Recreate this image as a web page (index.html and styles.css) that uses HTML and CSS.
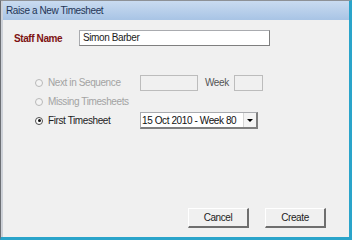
FILE: index.html
```html
<!DOCTYPE html>
<html>
  <head>
    <title>Raise a New Timesheet</title>
    <link rel="stylesheet" href="styles.css">
  </head>
  <body>
    <div class="window">
      <div class="frame">
        <div class="titlebar">Raise a New Timesheet</div>
        <div class="content">
          <div class="staff-row">
            <label class="staff-label">Staff Name</label>
            <div class="textbox staff-box">Simon Barber</div>
          </div>

          <div class="options">
            <div class="option disabled">
              <span class="radio"></span>
              <span class="option-label">Next in Sequence</span>
              <div class="textbox off seq-box"></div>
              <span class="week-label">Week</span>
              <div class="textbox off week-box"></div>
            </div>
            <div class="option disabled">
              <span class="radio"></span>
              <span class="option-label">Missing Timesheets</span>
            </div>
            <div class="option">
              <span class="radio checked"></span>
              <span class="option-label">First Timesheet</span>
              <div class="combo">
                <span class="combo-text">15 Oct 2010 - Week 80</span>
                <span class="combo-btn"></span>
              </div>
            </div>
          </div>

          <div class="buttons">
            <button class="btn">Cancel</button>
            <button class="btn">Create</button>
          </div>
        </div>
      </div>
    </div>
  </body>
</html>
```

FILE: styles.css
```css
body {
  margin: 0;
  font-family: "Liberation Sans", Arial, sans-serif;
  font-size: 10px;
  letter-spacing: -0.4px;
  color: #1c1c1c;
}
.window {
  width: 352px;
  height: 240px;
  box-sizing: border-box;
  border-top: 1px solid #8d9196;
  border-left: 1px solid #6c6f74;
  border-right: 3px solid #2aa4ca;
  border-bottom: 3px solid #2aa4ca;
  background: #f0f0f0;
}
.frame {
  height: 100%;
  display: flex;
  flex-direction: column;
  border-left: 2px solid #cdd1d8;
}
.titlebar {
  height: 19px;
  line-height: 19px;
  padding-left: 3px;
  color: #1f3556;
  background: linear-gradient(#c9dbf0, #a8c4e5);
}
.content {
  flex: 1;
  display: flex;
  flex-direction: column;
  padding: 10px 23px 9px 11px;
}
.staff-row {
  display: flex;
  align-items: center;
}
.staff-label {
  width: 65px;
  font-weight: bold;
  color: #7d1212;
}
.textbox {
  box-sizing: border-box;
  height: 16px;
  line-height: 14px;
  padding-left: 3px;
  background: #fff;
  border: 1px solid #a9abaf;
  border-right-color: #7f7f7f;
  border-bottom-color: #7f7f7f;
}
.staff-box {
  width: 191px;
}
.textbox.off {
  background: #f0f0f0;
  border-color: #bcbcbc;
}
.options {
  display: flex;
  flex-direction: column;
  gap: 2px;
  margin-top: 28px;
  padding-left: 21px;
}
.option {
  display: flex;
  align-items: center;
  height: 17px;
}
.radio {
  box-sizing: border-box;
  width: 8px;
  height: 8px;
  margin-right: 5px;
  border-radius: 50%;
  border: 1px solid #4d4d4d;
  background: #fff;
  display: flex;
  align-items: center;
  justify-content: center;
}
.radio.checked::after {
  content: "";
  width: 3px;
  height: 3px;
  border-radius: 50%;
  background: #111;
}
.option-label {
  width: 92px;
}
.disabled {
  color: #a3a3a3;
}
.disabled .radio {
  border-color: #b8b8b8;
  background: #f4f4f4;
}
.seq-box {
  width: 58px;
}
.week-label {
  margin: 0 5px 0 7px;
  color: #555;
}
.week-box {
  width: 29px;
}
.combo {
  box-sizing: border-box;
  width: 118px;
  height: 17px;
  display: flex;
  align-items: center;
  justify-content: space-between;
  background: #fff;
  border: 1px solid #a9abaf;
  border-right: 2px solid #7f7f7f;
  border-bottom: 2px solid #7f7f7f;
  padding-left: 1px;
  color: #111;
}
.combo-btn {
  width: 12px;
  height: 100%;
  display: flex;
  align-items: center;
  justify-content: center;
  background: #f4f4f4;
  border-left: 1px solid #d6d6d6;
}
.combo-btn::after {
  content: "";
  border-left: 3px solid transparent;
  border-right: 3px solid transparent;
  border-top: 3px solid #000;
}
.buttons {
  margin-top: auto;
  display: flex;
  justify-content: flex-end;
  gap: 16px;
}
.btn {
  box-sizing: border-box;
  width: 61px;
  height: 20px;
  padding: 0;
  font: inherit;
  letter-spacing: inherit;
  color: #1c1c1c;
  background: #f0f0f0;
  border: 1px solid #fff;
  border-right: 2px solid #6e6e6e;
  border-bottom: 2px solid #6e6e6e;
}
```
